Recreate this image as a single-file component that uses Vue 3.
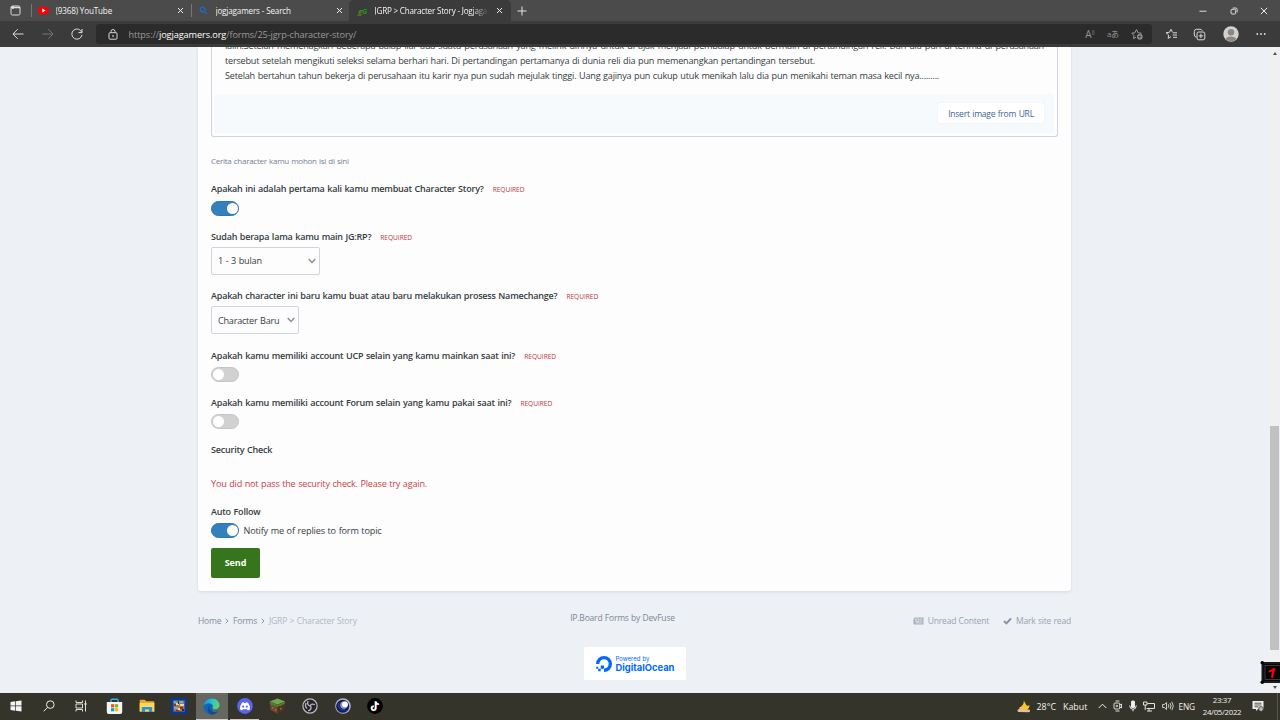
<template>
  <div class="screen">
    <header class="tabs">
      <div class="workspaces">
        <svg width="11" height="11" viewBox="0 0 11 11" fill="none" stroke="#ddd">
          <rect x="1" y="1" width="9" height="9" rx="1.5" />
          <path d="M1 2.5h9M3 1v3" stroke-width="1.6" />
        </svg>
      </div>
      <div v-for="tab in tabs" :key="tab.id" class="tab" :class="tab.id">
        <svg v-if="tab.id === 'youtube'" class="favicon" width="11" height="11" viewBox="0 0 11 11">
          <rect x="0.3" y="1.7" width="10.4" height="7.6" rx="2" fill="#f00" />
          <path d="M4.3 3.6v3.8l3.2-1.9z" fill="#fff" />
        </svg>
        <svg v-else-if="tab.id === 'search'" class="favicon" width="11" height="11" viewBox="0 0 11 11" fill="none" stroke="#1670c4" stroke-width="1.3">
          <circle cx="4.6" cy="4.6" r="2.4" />
          <path d="M6.4 6.4L8.8 8.8" />
        </svg>
        <span v-else class="favicon jg"><i>g</i><i>G</i></span>
        <span class="tab-title">{{ tab.title }}</span>
        <svg class="close" width="7" height="7" viewBox="0 0 7 7" stroke="#eee" stroke-width="1"><path d="M1 1l5 5M6 1L1 6" /></svg>
      </div>
      <svg class="new-tab" width="10" height="10" viewBox="0 0 10 10" stroke="#e6e6e6"><path d="M5 .5v9M.5 5h9" /></svg>
      <div class="window-buttons">
        <svg width="8" height="8" viewBox="0 0 8 8" stroke="#ddd"><path d="M.5 4.2h7" /></svg>
        <svg width="8" height="8" viewBox="0 0 8 8" fill="none" stroke="#ddd"><rect x="1" y="2.3" width="4.7" height="4.7" rx="1" /><path d="M2.8 1h3q1.3 0 1.3 1.3v3" /></svg>
        <svg width="8" height="8" viewBox="0 0 8 8" stroke="#eee"><path d="M.8.8l6.4 6.4M7.2.8L.8 7.2" /></svg>
      </div>
    </header>

    <div class="toolbar">
      <div class="nav-buttons">
        <svg width="12" height="12" viewBox="0 0 12 12" fill="none" stroke="#dcdcdc"><path d="M11.5 6H1M5.7 1.2L.9 6l4.8 4.8" /></svg>
        <svg width="12" height="12" viewBox="0 0 12 12" fill="none" stroke="#777"><path d="M.5 6H11M6.3 1.2L11.1 6l-4.8 4.8" /></svg>
        <svg width="12" height="12" viewBox="0 0 12 12" fill="none" stroke="#dcdcdc"><path d="M10.8 4.5A5.1 5.1 0 1 0 11 6.8M11 1v3.6H7.4" /></svg>
      </div>
      <div class="address">
        <svg class="lock" width="10" height="11" viewBox="0 0 10 11" fill="none" stroke="#d5d5d5"><rect x="1" y="3.7" width="8" height="6.5" rx="1" /><path d="M3 3.7V2.5a2 2 0 0 1 4 0v1.2" /><circle cx="5" cy="7" r=".5" /></svg>
        <span class="url">https://<b>jogjagamers.org</b>/forms/25-jgrp-character-story/</span>
        <div class="address-icons">
          <span class="read">A<sup>))</sup></span>
          <span class="translate">aあ</span>
          <svg width="13" height="12" viewBox="0 0 13 12" fill="none" stroke="#9b9b9b">
            <path d="M5 9.2L2.5 10.6 3 7.5.8 5.2l3-.4L5.5 1.6l1.6 3.2 3.2.4-.6.7" />
            <circle cx="8.8" cy="8.7" r="2.8" fill="#9b9b9b" stroke="none" /><path d="M8.8 7v3.4M7.1 8.7h3.4" stroke="#2b2b2b" stroke-width=".8" />
          </svg>
        </div>
      </div>
      <div class="tools">
        <svg width="12" height="12" viewBox="0 0 12 12" fill="none" stroke="#d9d9d9"><path d="M6 8.7L3.1 10.4l.6-3.3L1 4.7l3.4-.4L6 1.3l1.3 2.6M7.5 4.8H12M7.8 7H12M8 9.3h4" /></svg>
        <svg width="13" height="13" viewBox="0 0 13 13" fill="none" stroke="#d9d9d9"><path d="M3.2 9.2Q1.3 8.7 1.3 7V3.5Q1.3 1.3 3.5 1.3h3.7q1.5 0 2 1.4" /><rect x="4" y="4" width="7.8" height="7.8" rx="1.7" /><path d="M7.9 5.7v4.4M5.7 7.9h4.4" /></svg>
        <svg width="16" height="16" viewBox="0 0 16 16"><circle cx="8" cy="8" r="7.7" fill="#d5d2ce" /><circle cx="8" cy="6.2" r="3.3" fill="#8b8884" /><path d="M2.5 13q1.2-2.6 5.5-2.6t5.5 2.6A7.7 7.7 0 0 1 2.5 13" fill="#8b8884" /></svg>
        <svg width="10" height="4" viewBox="0 0 10 4" fill="#e0e0e0"><circle cx="1.3" cy="2" r=".9" /><circle cx="5" cy="2" r=".9" /><circle cx="8.7" cy="2" r=".9" /></svg>
      </div>
    </div>

    <div class="viewport">
      <main class="page">
        <section class="card">
          <div class="editor">
            <div class="story">
              <p class="line full">lalin.Setelah memenagkan beberapa balap liar ada suatu perusahaan yang melirik dirinya untuk di ajak menjadi pembalap untuk bermain di pertandingan reli. Dan dia pun di terima di perusahaan</p>
              <p class="line">tersebut setelah mengikuti seleksi selama berhari hari. Di pertandingan pertamanya di dunia reli dia pun memenangkan pertandingan tersebut.</p>
              <p class="line">Setelah bertahun tahun bekerja di perusahaan itu karir nya pun sudah mejulak tinggi. Uang gajinya pun cukup utuk menikah lalu dia pun menikahi teman masa kecil nya.........</p>
            </div>
            <div class="attach"><button class="insert">Insert image from URL</button></div>
          </div>
          <p class="hint">Cerita character kamu mohon isi di sini</p>

          <div v-for="f in fields" :key="f.label" class="field" :class="f.type">
            <div class="label"><span>{{ f.label }}</span><small>REQUIRED</small></div>
            <div v-if="f.type === 'toggle'" class="switch" :class="{ on: f.on }"></div>
            <div v-else class="select" :class="f.id">
              <span>{{ f.value }}</span>
              <svg width="8" height="6" viewBox="0 0 8 6" fill="none" stroke="#8c8c8c" stroke-width="1.4"><path d="M.7 1L4 4.4 7.3 1" /></svg>
            </div>
          </div>

          <div class="label">Security Check</div>
          <p class="error">You did not pass the security check. Please try again.</p>
          <div class="label">Auto Follow</div>
          <div class="follow">
            <div class="switch on"></div>
            <span>Notify me of replies to form topic</span>
          </div>
          <button class="send">Send</button>
        </section>

        <footer class="footer">
          <nav class="crumbs">
            <span>Home</span>
            <svg width="4" height="6" viewBox="0 0 4 6" fill="none" stroke="#8d96a6"><path d="M.7.7L3 3 .7 5.3" /></svg>
            <span>Forms</span>
            <svg width="4" height="6" viewBox="0 0 4 6" fill="none" stroke="#8d96a6"><path d="M.7.7L3 3 .7 5.3" /></svg>
            <span class="current">JGRP &gt; Character Story</span>
          </nav>
          <div class="credits">
            <span class="devfuse">IP.Board Forms by DevFuse</span>
            <div class="ocean">
              <svg width="18" height="18" viewBox="0 0 18 18" fill="#0069ff"><path d="M9 17v-3.4A4.7 4.7 0 1 0 4.3 9H1A8 8 0 1 1 9 17zM5.7 10.5H9v3.3H5.7zM3.2 13.8h2.5v2.5H3.2zM1.2 11.8h2v2h-2z" /></svg>
              <div class="ocean-text"><span>Powered by</span><strong>DigitalOcean</strong></div>
            </div>
          </div>
          <div class="links">
            <svg width="11" height="8" viewBox="0 0 11 8"><path d="M1.5.5h9v7H1.3Q.4 7.5.4 6.5V1.8h1z" fill="#a9b1be" /><path d="M2.8 2h3v2.5h-3zM6.7 2.3h2.6M6.7 4h2.6M2.8 5.9h6.5" stroke="#edf0f5" stroke-width=".7" fill="none" /></svg>
            <span class="unread">Unread Content</span>
            <svg width="9" height="8" viewBox="0 0 9 8" fill="none" stroke="#8993a2" stroke-width="2"><path d="M1 4l2.4 2.4L8 1.5" /></svg>
            <span class="mark">Mark site read</span>
          </div>
        </footer>
      </main>
      <div class="scrollbar">
        <i class="arrow up"></i>
        <div class="thumb"></div>
        <i class="arrow down"></i>
      </div>
      <div class="recorder">
        <svg width="20" height="25" viewBox="0 0 20 25">
          <rect x="2.5" y="3" width="20" height="19" fill="#050505" stroke="#1a1a1a" stroke-width="2" />
          <rect x="5" y="5.5" width="18" height="14" fill="none" stroke="#555" stroke-width=".7" />
          <circle cx="2.3" cy="2.8" r="1.8" /><circle cx="2.3" cy="22.3" r="1.8" />
          <path d="M8.7 11.2q2.8.2 5.8-2.7l-1.4 4.2M13.6 9.5L12 17.8" fill="none" stroke="#f00" stroke-width="2.1" />
        </svg>
      </div>
    </div>

    <footer class="taskbar">
      <div class="apps">
        <div class="app"><svg width="12" height="12" viewBox="0 0 12 12" fill="#f4f4f4"><path d="M.5 2l4.7-.7v4.3H.5zM5.9 1.2L11.5.4v5.2H5.9zM.5 6.3h4.7v4.4L.5 10zM5.9 6.3h5.6v5.3l-5.6-.8z" /></svg></div>
        <div class="app"><svg width="12" height="12" viewBox="0 0 12 12" fill="none" stroke="#eee"><circle cx="7.3" cy="4.6" r="3.8" /><path d="M4.5 7.4L.7 11.3" /></svg></div>
        <div class="app"><svg width="12" height="12" viewBox="0 0 12 12" fill="none" stroke="#ddd"><path d="M1 .5v2h6.5v-2M1 11.5v-2h6.5v2M1 4h6.5v4H1zM10.5.5v11" /><path d="M10.5 3v2" stroke-width="2" /></svg></div>
        <div class="app"><svg width="17" height="17" viewBox="0 0 17 17"><path d="M5 5V2.2q0-1 1-1h5q1 0 1 1V5" fill="none" stroke="#2bb5ea" stroke-width="1.4" /><path d="M.8 4h15.4v10q0 2-2 2H2.8q-2 0-2-2z" fill="#f5f5f5" /><path d="M5 6.2h3.2v3.2H5z" fill="#f25022" /><path d="M8.9 6.2h3.2v3.2H8.9z" fill="#7fba00" /><path d="M5 10.1h3.2v3.2H5z" fill="#00a4ef" /><path d="M8.9 10.1h3.2v3.2H8.9z" fill="#ffb900" /></svg></div>
        <div class="app"><svg width="16" height="14" viewBox="0 0 16 14"><path d="M.7 1.6q0-.8.8-.8h4.2L7.4 2.3h7q.9 0 .9.9v9.3H.7z" fill="#f0a922" /><path d="M.7 4h14.6v8.6H.7z" fill="#ffd75e" /><path d="M2.8 13V8.6q0-.7.7-.7h9q.7 0 .7.7V13H10v-2.4H6V13z" fill="#2b8fdc" /></svg></div>
        <div class="app"><svg width="16" height="16" viewBox="0 0 16 16"><path d="M0 0h16v16H0z" fill="#0638a2" /><path d="M2.5 2.5h11v11h-11z" fill="#a17852" /><path d="M2.5 3h3v2h-3zM8 3h4v2H8zM3 9h4v2H3z" fill="#5ab3dd" /><path d="M5 5h3v2H5zM9 6h4v2H9zM7 10h2v2H7z" fill="#e8d5a0" /><path d="M3 6h2v2H3zM9 9h3v2H9zM5 12h3v1.5H5z" fill="#a02a20" /><path d="M7 3h1v3H7zM11 11h2v2h-2z" fill="#282f30" /></svg></div>
        <div class="app active"><svg width="17" height="17" viewBox="0 0 17 17">
          <defs><linearGradient id="edge" x1="0" y1=".3" x2="1" y2=".5"><stop stop-color="#1b91da" /><stop offset=".55" stop-color="#2dc4cf" /><stop offset="1" stop-color="#64d95a" /></linearGradient></defs>
          <circle cx="8.5" cy="8.5" r="8" fill="#1665b4" />
          <path d="M10.5 16.3L9.5 10.6l3.5.8 2.8-1 2.5 1.5-2.5 5z" fill="#666760" />
          <path d="M.5 8.4C1 3.5 4.4.5 8.7.5c4.7 0 7.8 3.4 7.8 6.8 0 2.6-2 4-4.3 4-2 0-3-.7-2.7-1.5.8-1.6.2-4.5-3.3-4.5C3.5 5.3 1 6.6.5 8.4z" fill="url(#edge)" />
          <path d="M7 7.2c-1.7 4 1.3 7 5.2 6.7 1.5-.1 2.6-.7 3.2-1.1-1.2 2.3-4.1 3.9-7.1 3.7C5 15.8 3.4 9.7 7 7.2z" fill="#124b92" />
        </svg></div>
        <div class="app running"><svg width="16" height="16" viewBox="0 0 16 16"><circle cx="8" cy="8" r="7.9" fill="#5865f2" /><path d="M3 11.3Q3 7 5 4.7l1.8-.5.5.8h1.4l.5-.8 1.8.5q2 2.3 2 6.6-1.2.9-2.3 1l-.7-1H6l-.7 1q-1.1-.1-2.3-1z" fill="#fff" /><circle cx="6.2" cy="8.6" r="1.1" fill="#5865f2" /><circle cx="9.8" cy="8.6" r="1.1" fill="#5865f2" /></svg></div>
        <div class="app"><svg width="17" height="16" viewBox="0 0 17 16"><path d="M.8 3.5L8.5.4l7.7 3.1-7.7 3.3z" fill="#72a64c" /><path d="M.8 3.5l7.7 3.3v8.9L1.5 12z" fill="#6f482f" /><path d="M16.2 3.5L8.5 6.8v8.9l7-3.7z" fill="#503221" /><path d="M.8 3.5l7.7 3.3v2.2l-2-1-1 .5-2-1.5-1 .5L.9 5.5zM16.2 3.5L8.5 6.8V9l2-1 1 .2 2-1.7 1 .3L16 5.3z" fill="#4e7c33" /><path d="M3 9h1.5v1.5H3zM6 11h1.5v1.5H6zM11 10h1.5v1.5H11z" fill="#9c7351" /></svg></div>
        <div class="app"><svg width="16" height="16" viewBox="0 0 16 16" fill="none" stroke="#bcbcbf"><circle cx="8" cy="8" r="7.1" fill="#24242a" stroke-width="1.2" /><path d="M6.1 3q-1.7 4 2.2 5.2M12.8 6.6q-4-1.8-5 2.1M6.1 12.8q3.8-.8 2.7-4.9M4 5q-1.4 4 1.2 5.5" stroke-width="1.3" /></svg></div>
        <div class="app"><svg width="16" height="16" viewBox="0 0 16 16"><circle cx="8" cy="8" r="7.8" fill="#adb9d7" /><circle cx="7.7" cy="8.3" r="6.5" fill="#151d50" /><circle cx="9" cy="7.1" r="3.8" fill="#8a9bd3" /><circle cx="10" cy="6.3" r="2.9" fill="#fff" /><path d="M4 5.2a5 5 0 0 0 6.3 6.5" fill="none" stroke="#2a3a90" stroke-width="1.5" /></svg></div>
        <div class="app"><svg width="16" height="16" viewBox="0 0 16 16"><circle cx="8" cy="8" r="7.9" fill="#000" /><g fill="none" stroke-width="1.5"><path d="M8.3 3.3v6.8a2 2 0 1 1-1.9-2.2M8.4 3.3q.4 2.5 3 2.7" stroke="#25f4ee" /><path d="M9.2 3.9v6.8a2 2 0 1 1-1.9-2.2M9.3 3.9q.4 2.5 3 2.7" stroke="#fe2c55" /><path d="M8.7 3.6v6.8a2 2 0 1 1-1.9-2.2M8.8 3.6q.4 2.5 3 2.7" stroke="#fff" /></g></svg></div>
      </div>
      <div class="tray">
        <svg width="14" height="13" viewBox="0 0 14 13"><path d="M6.8.5q.4 5-4.8 7.3 3 4.3 7.5 2.3 3.5-1.8 2.8-5.3-1 1.5-2.6.6Q8.3 3.5 6.8.5z" fill="#ffc51c" /><path d="M1.8 12q-1.5-.1-1.4-1.5.2-1.2 1.5-1.2Q2.5 7.5 4.5 8q1.3.4 1.6 1.5 4.8-.8 6.6.3 1.3 2.2-1.5 2.4z" fill="#e4bda5" /></svg>
        <span class="temp">28°C</span>
        <span class="weather">Kabut</span>
        <svg width="9" height="6" viewBox="0 0 9 6" fill="none" stroke="#eee"><path d="M.7 5l3.8-3.8L8.3 5" /></svg>
        <svg width="9" height="12" viewBox="0 0 9 12" fill="none" stroke="#ddd"><path d="M2.5 1h4M2.5 11h4" /><rect x="1" y="3" width="5.7" height="6" rx="1" /><path d="M6.7 5L8.5 4v4L6.7 7" /><circle cx="3.8" cy="6" r=".8" /></svg>
        <svg width="8" height="12" viewBox="0 0 8 12" fill="#eee"><rect x="2" y=".5" width="4" height="7.5" rx="1.5" /><path d="M.7 5.5q.2 3.8 3.3 3.8t3.3-3.8M4 9.3v2" fill="none" stroke="#eee" /></svg>
        <svg width="12" height="11" viewBox="0 0 12 11" fill="none" stroke="#e4e4e4"><path d="M4.5 2.5h7v5h-8M6 7.5v2.5M4 10h5M.5 1h3.5v3H.5zM2.2 4v5" /></svg>
        <svg width="12" height="10" viewBox="0 0 12 10" fill="none" stroke="#ddd"><path d="M.6 3.5h1.7l2.2-2v7l-2.2-2H.6zM6.3 3.3q1.2 1.7 0 3.4M8 2q2.2 3 0 6M9.8.8q3 4.2 0 8.4" stroke-width=".9" /></svg>
        <span class="lang">ENG</span>
        <div class="clock"><span>23:37</span><span>24/05/2022</span></div>
        <svg width="12" height="12" viewBox="0 0 12 12"><path d="M.5 1h11v8H6L4 11V9H.5z" fill="#f0f0f0" /><path d="M2.5 3.2h7M2.5 5h7M2.5 6.8h4" stroke="#34342a" stroke-width=".8" /><circle cx="9" cy="9" r="2.4" fill="#bbb" stroke="#34342a" stroke-width=".7" /></svg>
        <i class="show-desktop"></i>
      </div>
    </footer>
  </div>
</template>

<script setup>
import { ref } from 'vue';

const tabs = ref([
  { id: 'youtube', title: '(9368) YouTube' },
  { id: 'search', title: 'jogjagamers - Search' },
  { id: 'forum', title: 'JGRP > Character Story - Jogjagamers' },
]);

const fields = ref([
  { id: 'first', type: 'toggle', label: 'Apakah ini adalah pertama kali kamu membuat Character Story?', on: true },
  { id: 'duration', type: 'choice', label: 'Sudah berapa lama kamu main JG:RP?', value: '1 - 3 bulan' },
  { id: 'origin', type: 'choice', label: 'Apakah character ini baru kamu buat atau baru melakukan prosess Namechange?', value: 'Character Baru' },
  { id: 'ucp', type: 'toggle', label: 'Apakah kamu memiliki account UCP selain yang kamu mainkan saat ini?', on: false },
  { id: 'other', type: 'toggle', label: 'Apakah kamu memiliki account Forum selain yang kamu pakai saat ini?', on: false },
]);
</script>

<style>
body {
  overflow: hidden;
}
</style>

<style scoped>
.screen {
  width: 1280px;
  height: 720px;
  display: flex;
  flex-direction: column;
  overflow: hidden;
  font-family: "Open Sans", "Noto Sans", sans-serif;
  font-size: 9.1px;
  color: #353c41;
}

.screen * {
  box-sizing: border-box;
}

svg {
  display: block;
  flex: none;
}

p {
  margin: 0;
}

button {
  font: inherit;
  border: none;
  padding: 0;
}

/* browser */
.tabs {
  height: 21px;
  flex: none;
  display: flex;
  align-items: center;
  background: #4b4b4b;
  color: #f4f4f4;
  font-size: 8.1px;
}

.workspaces {
  width: 32px;
  height: 13px;
  display: flex;
  align-items: center;
  padding-left: 10px;
  border-right: 1px solid #777;
}

.tab {
  height: 21px;
  display: flex;
  align-items: center;
  padding: 0 7px 0 6px;
}

.tab.youtube {
  width: 159px;
}

.tab.search {
  width: 158px;
  padding: 0 5px 0 7px;
  position: relative;
}

.tab.search::before {
  content: "";
  position: absolute;
  left: 0;
  top: 4px;
  height: 13px;
  border-left: 1px solid #777;
}

.tab.forum {
  width: 162px;
  background: #3b3b3b;
  border-radius: 5px 5px 0 0;
  padding: 0 8.5px 0 9px;
}

.favicon {
  width: 11px;
  margin-right: 6.5px;
  flex: none;
}

.jg {
  display: flex;
  margin-right: 5.5px;
  font-size: 7.6px;
  line-height: 10px;
  font-weight: bold;
  color: #159b16;
}

.jg i:first-child {
  color: #677a25;
}

.tab-title {
  flex: 1;
  overflow: hidden;
  white-space: nowrap;
  letter-spacing: -0.15px;
}

.forum .tab-title {
  letter-spacing: -0.2px;
  mask-image: linear-gradient(90deg, #000 85%, transparent);
}

.close {
  margin-left: 7px;
}

.search .close {
  margin-right: 1px;
}

.new-tab {
  margin-left: 6px;
}

.window-buttons {
  margin-left: auto;
  display: flex;
  gap: 22.5px;
  padding-right: 12px;
}

.toolbar {
  height: 26px;
  flex: none;
  display: flex;
  align-items: center;
  background: #3b3b3b;
}

.nav-buttons {
  width: 96px;
  display: flex;
  gap: 17.5px;
  padding-left: 12px;
}

.address {
  width: 1056px;
  height: 20px;
  display: flex;
  align-items: center;
  padding: 0 8px 0 12px;
  border-radius: 3px;
  background: #2b2b2b;
}

.url {
  margin-left: 10.5px;
  color: #999;
  font-size: 9.2px;
  letter-spacing: -0.11px;
}

.url b {
  font-weight: normal;
  color: #fff;
}

.address-icons {
  margin-left: auto;
  display: flex;
  align-items: center;
  gap: 12.5px;
  color: #969696;
}

.read {
  font-size: 10px;
}

.read sup {
  font-size: 5px;
  line-height: 0;
}

.translate {
  font-family: "Open Sans", "Noto Sans CJK JP", sans-serif;
  font-size: 8px;
  letter-spacing: -0.5px;
  line-height: 12px;
  white-space: nowrap;
}

.tools {
  display: flex;
  flex: 1;
  align-items: center;
  justify-content: space-between;
  padding: 0 14px 0 12.5px;
}

/* page */
.viewport {
  height: 646px;
  flex: none;
  display: flex;
  overflow: hidden;
  position: relative;
  background: #edf0f5;
}

.page {
  width: 873px;
  margin-left: 198px;
}

.card {
  height: 544px;
  padding: 0 13px;
  background: #fdfdfd;
  border-radius: 0 0 3px 3px;
  box-shadow: 0 1px 3px rgba(60, 80, 100, 0.12);
  letter-spacing: -0.2px;
  word-spacing: 0.5px;
}

.editor {
  width: 847px;
  height: 90px;
  display: flex;
  flex-direction: column;
  overflow: hidden;
  border: 1px solid #cfd4df;
  border-top: none;
  border-radius: 0 0 3px 3px;
}

.story {
  height: 54.5px;
  flex: none;
  margin-top: -8px;
  padding: 0 13px;
}

.full {
  text-align-last: justify;
}

.line {
  height: 14.8px;
  line-height: 14.8px;
  white-space: nowrap;
}

.attach {
  height: 39.5px;
  margin: 0 3px;
  padding-right: 10px;
  display: flex;
  align-items: center;
  justify-content: flex-end;
  background: #f6fafd;
}

.insert {
  width: 106px;
  height: 20px;
  border-radius: 2px;
  background: #fff;
  color: #3d6594;
  font-size: 8.5px;
  letter-spacing: -0.22px;
  word-spacing: 0.5px;
  box-shadow: 0 0 1px #ccd6e0;
}

.hint {
  margin: 15.5px 0 13.8px;
  height: 15px;
  line-height: 15px;
  font-size: 8px;
  letter-spacing: -0.27px;
  color: #768199;
}

.field.toggle {
  height: 47.3px;
}

.field.choice {
  height: 59.6px;
}

.label {
  height: 15px;
  line-height: 15px;
  font-size: 9px;
  font-weight: 600;
  letter-spacing: -0.21px;
  white-space: nowrap;
}

.label small {
  margin-left: 9px;
  font-size: 6.6px;
  font-weight: normal;
  letter-spacing: -0.03px;
  color: #b43742;
}

.switch {
  width: 28px;
  height: 15px;
  padding: 1px;
  border-radius: 8px;
  background: #d1d1d1;
  border: 1px solid #c5c5c5;
}

.field .switch {
  margin-top: 4.3px;
}

.switch::after {
  content: "";
  display: block;
  width: 11px;
  height: 11px;
  border-radius: 50%;
  background: #fff;
}

.switch.on {
  background: #3480bd;
  border-color: #2c76b1;
}

.switch.on::after {
  margin-left: 14px;
}

.select {
  width: 109px;
  height: 28px;
  margin-top: 3.3px;
  padding: 0 3.5px 0 6px;
  display: flex;
  align-items: center;
  justify-content: space-between;
  border: 1px solid #cfd4df;
  border-radius: 2px;
}

.select.origin {
  width: 88px;
  letter-spacing: -0.23px;
}

.error {
  height: 15px;
  margin: 18.2px 0 13px;
  line-height: 15px;
  color: #c7414b;
}

.follow {
  height: 15px;
  margin-top: 4px;
  display: flex;
  align-items: center;
  gap: 4.5px;
  letter-spacing: -0.16px;
}

.send {
  display: block;
  width: 49px;
  height: 30px;
  margin-top: 10px;
  border-radius: 2px;
  background: #36751b;
  color: #fff;
  font-size: 9px;
  font-weight: 700;
  letter-spacing: -0.1px;
}

.footer {
  display: grid;
  grid-template-columns: 1fr auto 1fr;
  padding-top: 20px;
  font-size: 8.5px;
  line-height: 14px;
  letter-spacing: -0.18px;
  word-spacing: 0.3px;
  color: #848e9f;
}

.crumbs,
.links {
  height: 19px;
  display: flex;
  align-items: center;
}

.crumbs {
  gap: 3.9px;
}

.current {
  color: #b0b7c2;
  letter-spacing: -0.12px;
}

.credits {
  display: flex;
  flex-direction: column;
  align-items: center;
  color: #7c8797;
}

.devfuse {
  position: relative;
  left: -12px;
}

.ocean {
  width: 102px;
  height: 33px;
  margin-top: 22px;
  display: flex;
  align-items: center;
  padding-left: 11px;
  gap: 3px;
  border-radius: 2px;
  background: #fff;
  color: #0069ff;
  letter-spacing: 0;
}

.ocean-text {
  display: flex;
  flex-direction: column;
  font-family: Inter, sans-serif;
}

.ocean-text span {
  font-size: 6px;
  line-height: 8px;
}

.ocean-text strong {
  font-size: 9.4px;
  line-height: 10px;
}

.links {
  justify-content: flex-end;
  gap: 4px;
  color: #9aa3b1;
}

.unread {
  margin-right: 10px;
}

.scrollbar {
  width: 11px;
  height: 646px;
  margin-left: auto;
  display: flex;
  flex-direction: column;
  align-items: center;
  background: #f0f0f0;
}

.thumb {
  width: 9px;
  height: 223.5px;
  margin-top: 371px;
  background: #c1c1c1;
}

.arrow {
  border: 2.5px solid transparent;
}

.up {
  margin-top: 5px;
  border-top: none;
  border-bottom: 3px solid #505050;
}

.down {
  margin-top: 36px;
  border-bottom: none;
  border-top: 3px solid #505050;
}

.recorder {
  position: absolute;
  right: 0;
  bottom: 8px;
}

/* taskbar */
.taskbar {
  height: 27px;
  flex: none;
  display: flex;
  justify-content: space-between;
  background: #34342a;
  color: #f2f2f2;
}

.apps {
  display: flex;
  margin-left: -0.3px;
}

.app {
  width: 32.67px;
  display: flex;
  align-items: center;
  justify-content: center;
  border-bottom: 1px solid transparent;
}

.app.active {
  background: #666760;
  border-color: #d7cfcd;
}

.app.running {
  border-image: linear-gradient(90deg, transparent 9%, #cfc8c5 9% 91%, transparent 91%) 1;
}

.tray {
  display: flex;
  align-items: center;
  width: 263.5px;
  border-bottom: 1px solid transparent;
  font-size: 8.9px;
}

.temp {
  width: 20px;
  margin: 0 6.5px 0 6px;
}

.weather {
  width: 24px;
  margin-right: 10.5px;
}

.tray svg + svg {
  margin-left: 6.5px;
}

.lang {
  margin: 0 8px 0 5px;
  width: 16px;
  font-size: 8.3px;
  letter-spacing: -0.2px;
}

.clock {
  width: 39px;
  margin-right: 10.5px;
  display: flex;
  flex-direction: column;
  align-items: center;
  font-size: 7.8px;
  line-height: 12px;
  letter-spacing: -0.28px;
}

.show-desktop {
  height: 27px;
  margin-left: 13px;
  border-left: 1px solid #56564c;
}
</style>
